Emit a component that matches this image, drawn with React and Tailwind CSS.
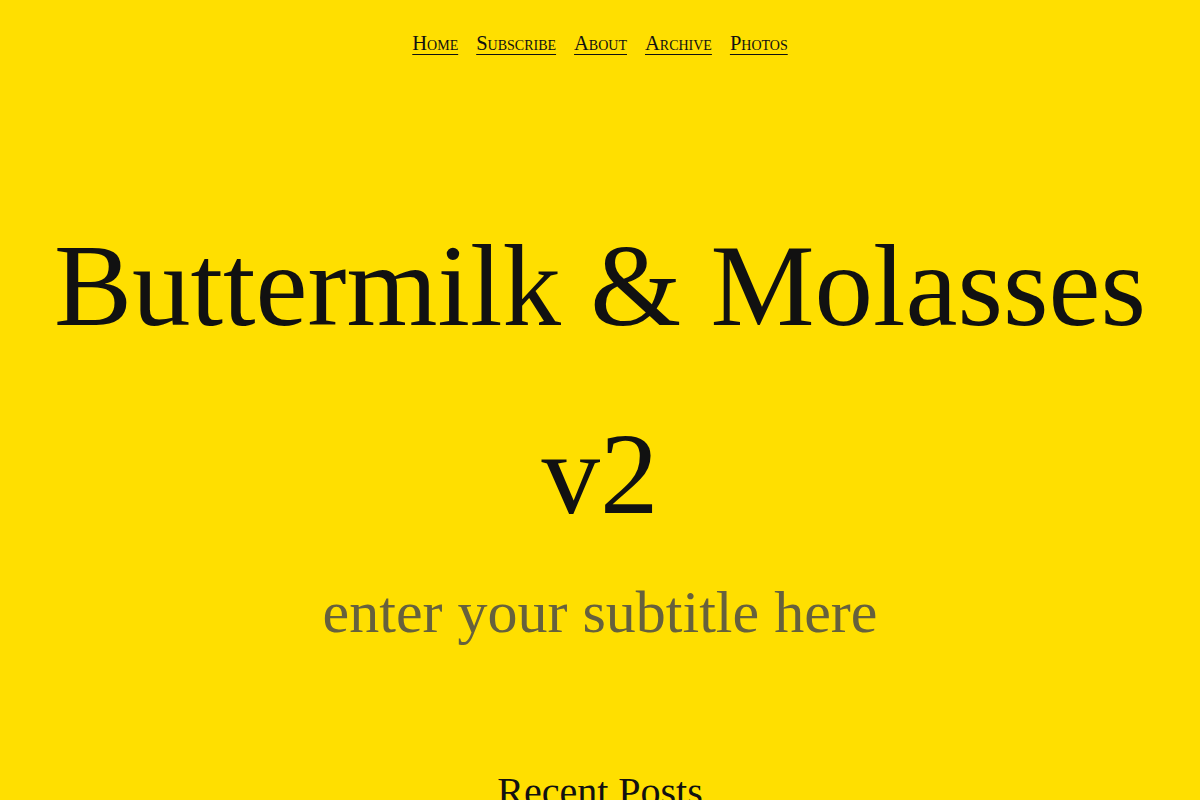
export default function App() {
  const links = ['Home', 'Subscribe', 'About', 'Archive', 'Photos'];

  return (
    <div
      className="min-h-screen bg-[#ffdf00] text-[#111] text-center overflow-hidden"
      style={{ fontFamily: '"Liberation Serif", "DejaVu Serif", serif' }}
    >
      <nav className="pt-[29px] flex justify-center gap-[18px] text-[20.5px] leading-[28px]">
        {links.map((l) => (
          <a key={l} href="#" className="underline underline-offset-[4px] decoration-1 [font-variant:small-caps]">
            {l}
          </a>
        ))}
      </nav>

      <header className="px-[40px]">
        <h1 className="mt-[135px] text-[117px] leading-[188px] font-normal">
          Buttermilk &amp; Molasses v2
        </h1>
        <p className="mt-[8px] text-[60px] leading-[72px] text-[#66613d]">enter your subtitle here</p>
      </header>

      <section className="mt-[120px]">
        <h2 className="text-[40px] leading-[48px]">Recent Posts</h2>
      </section>
    </div>
  );
}
